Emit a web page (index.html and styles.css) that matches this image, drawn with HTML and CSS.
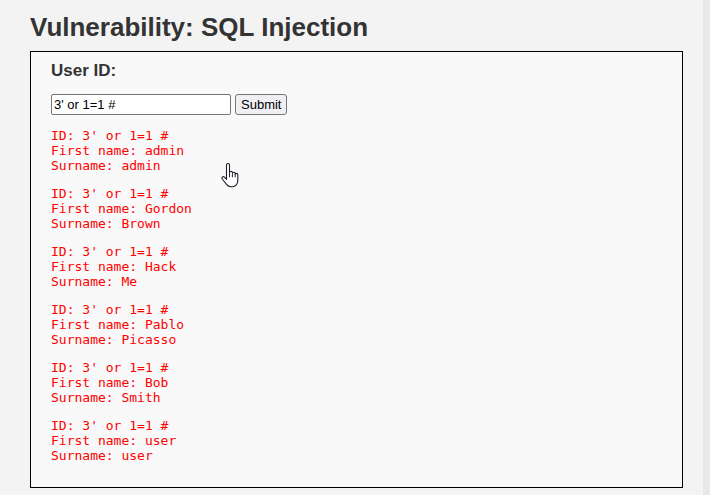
FILE: index.html
```html
<!DOCTYPE html>
<html>
<head>
<meta charset="utf-8">
<link rel="stylesheet" href="styles.css">
</head>
<body>
<div class="page">
  <h1 class="title">Vulnerability: SQL Injection</h1>
  <div class="vuln-area">
    <form class="form">
      <p class="label">User ID:</p>
      <div class="row">
        <input class="field" type="text" value="3' or 1=1 #">
        <button class="btn" type="button">Submit</button>
      </div>
    </form>
    <pre class="result">ID: 3' or 1=1 #
First name: admin
Surname: admin</pre>
    <pre class="result">ID: 3' or 1=1 #
First name: Gordon
Surname: Brown</pre>
    <pre class="result">ID: 3' or 1=1 #
First name: Hack
Surname: Me</pre>
    <pre class="result">ID: 3' or 1=1 #
First name: Pablo
Surname: Picasso</pre>
    <pre class="result">ID: 3' or 1=1 #
First name: Bob
Surname: Smith</pre>
    <pre class="result">ID: 3' or 1=1 #
First name: user
Surname: user</pre>
  </div>
</div>
<div class="scroll-track"></div>
<svg class="cursor" width="20" height="26" viewBox="0 0 20 26">
  <path d="M5.5 2.2c0-1 .7-1.7 1.5-1.7s1.5.7 1.5 1.7v7.3c.2-.8.8-1.2 1.5-1.2.8 0 1.4.6 1.4 1.4v.6c.2-.7.8-1.1 1.4-1.1.8 0 1.4.6 1.4 1.4v.8c.2-.6.7-1 1.3-1 .8 0 1.3.6 1.3 1.4v5.5c0 3.5-2.2 6.4-5.5 6.4H10c-2 0-3.3-.8-4.5-2.3L1.3 16c-.5-.7-.4-1.5.2-2 .6-.5 1.5-.4 2 .2l2 2.2z" fill="#fff" stroke="#1f1f2e" stroke-width="1.1" stroke-linejoin="round"/>
  <path d="M8.5 9.8v4.5M11.4 10.6v3.7M14.2 11.4v3" stroke="#1f1f2e" stroke-width="1" fill="none"/>
</svg>
</body>
</html>
```
FILE: styles.css
```css
html, body {
  margin: 0;
  padding: 0;
  background: #f3f3f3;
}
body {
  font-family: "Liberation Sans", Arial, sans-serif;
  color: #333;
}
.page {
  padding: 0 27px 8px 30px;
}
.title {
  margin: 0;
  padding-top: 10px;
  font-size: 26px;
  line-height: 34px;
  font-weight: bold;
  color: #333;
}
.vuln-area {
  margin-top: 7px;
  border: 1px solid #000;
  background: #f8f9f8;
  padding: 8px 20px 24px 20px;
}
.form {
  margin: 0;
}
.label {
  margin: 0;
  font-size: 17px;
  line-height: 22px;
  font-weight: bold;
  color: #333;
}
.row {
  display: flex;
  align-items: center;
  gap: 4px;
  margin-top: 12px;
}
.field {
  box-sizing: border-box;
  width: 180px;
  height: 21px;
  margin: 0;
  padding: 1px 2px;
  border: 1px solid #767676;
  border-radius: 2px;
  background: #fff;
  font-family: "Liberation Sans", Arial, sans-serif;
  font-size: 13px;
  color: #000;
}
.btn {
  box-sizing: border-box;
  height: 21px;
  margin: 0;
  padding: 1px 5px;
  border: 1px solid #767676;
  border-radius: 3px;
  background: #efeff4;
  font-family: "Liberation Sans", Arial, sans-serif;
  font-size: 13px;
  color: #000;
}
.result {
  margin: 13px 0 0 0;
  font-family: "DejaVu Sans Mono", monospace;
  font-size: 13px;
  line-height: 15px;
  color: #f00;
}
.scroll-track {
  position: fixed;
  top: 0;
  right: 0;
  width: 7px;
  height: 100%;
  background: #e8e8e8;
}
.cursor {
  position: absolute;
  left: 221px;
  top: 163px;
}
```
